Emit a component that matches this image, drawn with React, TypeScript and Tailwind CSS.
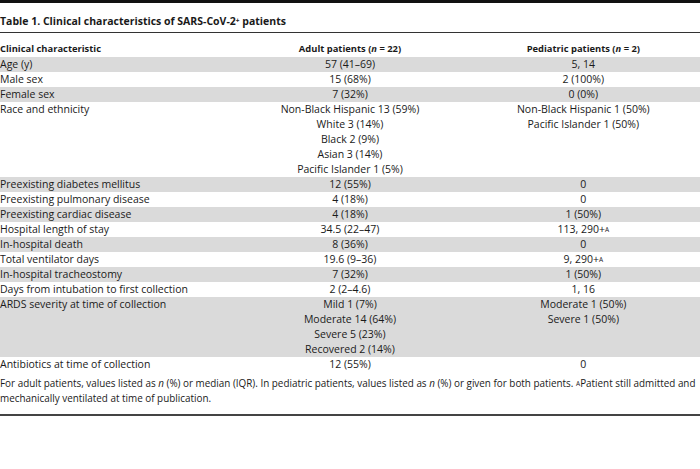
import React from "react";

type Row = { label: string; adult: React.ReactNode[]; ped: React.ReactNode[] };

const Sup = () => <sup className="text-[6.5px] relative top-[-1px] leading-none">A</sup>;

const rows: Row[] = [
  { label: "Age (y)", adult: ["57 (41–69)"], ped: ["5, 14"] },
  { label: "Male sex", adult: ["15 (68%)"], ped: ["2 (100%)"] },
  { label: "Female sex", adult: ["7 (32%)"], ped: ["0 (0%)"] },
  {
    label: "Race and ethnicity",
    adult: [
      "Non-Black Hispanic 13 (59%)",
      "White 3 (14%)",
      "Black 2 (9%)",
      "Asian 3 (14%)",
      "Pacific Islander 1 (5%)",
    ],
    ped: ["Non-Black Hispanic 1 (50%)", "Pacific Islander 1 (50%)"],
  },
  { label: "Preexisting diabetes mellitus", adult: ["12 (55%)"], ped: ["0"] },
  { label: "Preexisting pulmonary disease", adult: ["4 (18%)"], ped: ["0"] },
  { label: "Preexisting cardiac disease", adult: ["4 (18%)"], ped: ["1 (50%)"] },
  {
    label: "Hospital length of stay",
    adult: ["34.5 (22–47)"],
    ped: [
      <span key="a">
        113, 290+
        <Sup />
      </span>,
    ],
  },
  { label: "In-hospital death", adult: ["8 (36%)"], ped: ["0"] },
  {
    label: "Total ventilator days",
    adult: ["19.6 (9–36)"],
    ped: [
      <span key="b">
        9, 290+
        <Sup />
      </span>,
    ],
  },
  { label: "In-hospital tracheostomy", adult: ["7 (32%)"], ped: ["1 (50%)"] },
  { label: "Days from intubation to first collection", adult: ["2 (2–4.6)"], ped: ["1, 16"] },
  {
    label: "ARDS severity at time of collection",
    adult: ["Mild 1 (7%)", "Moderate 14 (64%)", "Severe 5 (23%)", "Recovered 2 (14%)"],
    ped: ["Moderate 1 (50%)", "Severe 1 (50%)"],
  },
  { label: "Antibiotics at time of collection", adult: ["12 (55%)"], ped: ["0"] },
];

export default function App() {
  return (
    <div
      className="w-[700px] h-[469px] bg-white text-[#1a1a1a] overflow-hidden"
      style={{ fontFamily: '"Open Sans", "Roboto", sans-serif' }}
    >
      <div className="border-t-[3px] border-[#111]" />
      <div className="pt-[10px] pb-[3px] text-[10.5px] leading-[16px] font-bold">
        Table 1. Clinical characteristics of SARS-CoV-2
        <sup className="text-[6.5px] relative top-[-2px] leading-none">+</sup> patients
      </div>
      <div className="border-t border-[#333]" />
      <div className="grid grid-cols-3 pt-[8px] pb-[1px] text-[9.4px] leading-[15px] font-bold">
        <div>Clinical characteristic</div>
        <div className="text-center">
          Adult patients (<i>n</i> = 22)
        </div>
        <div className="text-center">
          Pediatric patients (<i>n</i> = 2)
        </div>
      </div>
      <div className="text-[10.5px] leading-[15px]">
        {rows.map((r, i) => (
          <div
            key={r.label}
            className={`grid grid-cols-3 ${i % 2 === 0 ? "bg-[#dadada]" : "bg-white"}`}
          >
            <div>{r.label}</div>
            <div className="text-center flex flex-col">
              {r.adult.map((a, j) => (
                <div key={j}>{a}</div>
              ))}
            </div>
            <div className="text-center flex flex-col">
              {r.ped.map((a, j) => (
                <div key={j}>{a}</div>
              ))}
            </div>
          </div>
        ))}
      </div>
      <div className="pt-[4px] pb-[8px] text-[9.9px] leading-[15px]">
        <div className="whitespace-nowrap">
          For adult patients, values listed as <i>n</i> (%) or median (IQR). In pediatric
          patients, values listed as <i>n</i> (%) or given for both patients. <Sup />
          Patient still admitted and
        </div>
        <div>mechanically ventilated at time of publication.</div>
      </div>
      <div className="border-t-2 border-[#444]" />
    </div>
  );
}
